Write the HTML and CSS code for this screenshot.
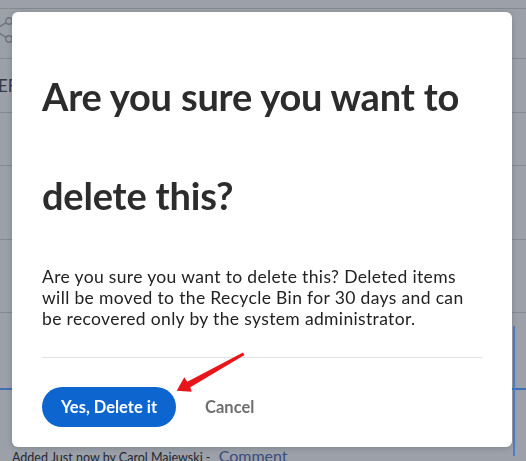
FILE: index.html
```html
<!DOCTYPE html>
<html>
<head>
<meta charset="utf-8">
<link rel="stylesheet" href="styles.css">
</head>
<body>
<div class="page">
  <div class="row row-top">
    <svg class="share" width="24" height="26" viewBox="0 0 24 26">
      <circle cx="19" cy="4" r="3.2" fill="none" stroke="#6f737b" stroke-width="1.4"/>
      <circle cx="19" cy="22" r="3.2" fill="none" stroke="#6f737b" stroke-width="1.4"/>
      <circle cx="4" cy="13" r="3.2" fill="none" stroke="#6f737b" stroke-width="1.4"/>
      <path d="M6.8 11.4 L16.2 5.6 M6.8 14.6 L16.2 20.4" stroke="#6f737b" stroke-width="1.4"/>
    </svg>
  </div>
  <div class="row row-2"></div>
  <div class="row row-3"><span class="ref">EF</span></div>
  <div class="row row-4"></div>
  <div class="row row-5"></div>
  <div class="row row-6"></div>
  <div class="row row-7"></div>
  <div class="footer">Added Just now by Carol Majewski - <span class="link">Comment</span></div>
</div>
<div class="vline"></div>

<div class="modal">
  <h1 class="title">Are you sure you want to delete this?</h1>
  <p class="body">Are you sure you want to delete this? Deleted items will be moved to the Recycle Bin for 30 days and can be recovered only by the system administrator.</p>
  <hr class="divider">
  <div class="actions">
    <button class="btn-primary">Yes, Delete it</button>
    <button class="btn-cancel">Cancel</button>
  </div>
</div>

<svg class="arrow" width="80" height="50" viewBox="0 0 80 50">
  <polygon points="76,2.5 77.5,5 23.3,37.3 24.7,41.7 9.7,40.7 17.3,27.3 20.3,31.7" fill="#e8151b"/>
</svg>
</body>
</html>
```

FILE: styles.css
```css
html, body {
  margin: 0;
  padding: 0;
}
body {
  width: 526px;
  height: 461px;
  overflow: hidden;
  background: #9ca0a8;
  font-family: "Lato", "Liberation Sans", sans-serif;
}
.page {
  display: flex;
  flex-direction: column;
}
.row {
  border-bottom: 1px solid #868a91;
  box-sizing: border-box;
}
.row-top {
  height: 9px;
  position: relative;
}
.share {
  position: absolute;
  left: -10px;
  top: 17px;
}
.row-2 { height: 50px; }
.row-3 {
  height: 54px;
  display: flex;
  align-items: flex-start;
}
.ref {
  font-size: 17px;
  color: #383c44;
  margin-left: -2px;
  margin-top: 17px;
  line-height: 20px;
}
.row-4 { height: 53px; }
.row-5 { height: 74px; }
.row-6 { height: 73px; }
.row-7 { height: 77px; border-bottom: 2px solid #3f6fb5; }
.footer {
  margin-top: 57px;
  padding-left: 12px;
  font-size: 12.5px;
  line-height: 18px;
  color: #262830;
  white-space: nowrap;
}
.link {
  color: #3a4c7e;
  font-size: 16px;
  margin-left: 5px;
}
.vline {
  position: absolute;
  left: 513px;
  top: 326px;
  width: 2px;
  height: 130px;
  background: #4f7fcc;
}

.modal {
  position: fixed;
  left: 12px;
  top: 12px;
  width: 500px;
  height: 435px;
  box-sizing: border-box;
  background: #ffffff;
  border-radius: 6px;
  padding: 35px 30px 0 30px;
  box-shadow: 0 1px 6px rgba(0,0,0,0.18);
  display: flex;
  flex-direction: column;
}
.title {
  margin: 0;
  font-size: 38px;
  line-height: 99px;
  font-weight: 700;
  color: #2c2c2c;
  letter-spacing: -0.2px;
}
.body {
  margin: 21px 0 0 0;
  font-size: 17.5px;
  line-height: 21px;
  letter-spacing: 0.35px;
  color: #222222;
}
.divider {
  margin: 28px 0 0 0;
  border: none;
  border-top: 1px solid #e1e1e1;
  height: 0;
}
.actions {
  margin-top: 29px;
  display: flex;
  align-items: center;
  gap: 29px;
}
.btn-primary {
  height: 40px;
  padding: 0 19px;
  border: none;
  border-radius: 20px;
  background: #0d66d0;
  color: #ffffff;
  font-family: inherit;
  font-size: 16.5px;
  font-weight: 700;
}
.btn-cancel {
  border: none;
  background: none;
  padding: 0;
  color: #6e6e6e;
  font-family: inherit;
  font-size: 16.5px;
  font-weight: 700;
}
.arrow {
  position: absolute;
  left: 167px;
  top: 350px;
}
```
